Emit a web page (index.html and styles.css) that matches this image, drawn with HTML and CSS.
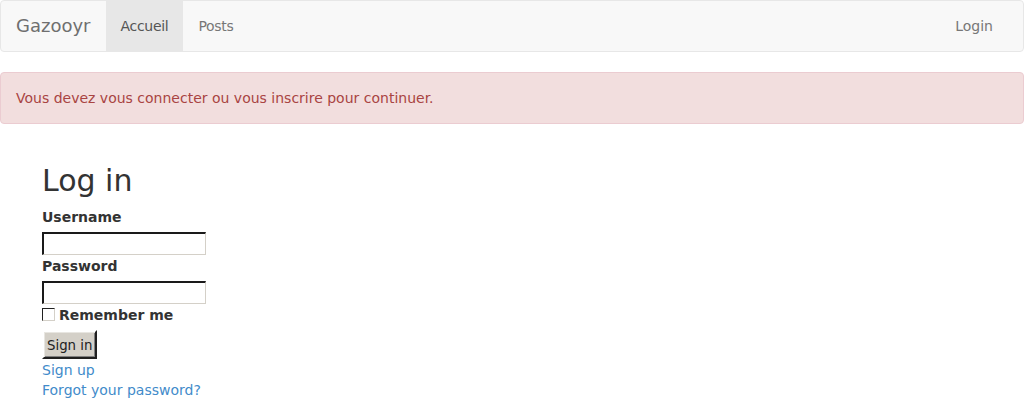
FILE: index.html
```html
<!DOCTYPE html>
<html>
<head>
<meta charset="utf-8">
<title>Gazooyr</title>
<link rel="stylesheet" href="styles.css">
</head>
<body>
<nav class="navbar">
  <div class="nav-left">
    <a class="brand" href="#">Gazooyr</a>
    <a class="nav-link tight active" href="#">Accueil</a>
    <a class="nav-link tight" href="#">Posts</a>
  </div>
  <div class="nav-right">
    <a class="nav-link" href="#">Login</a>
  </div>
</nav>
<div class="alert">Vous devez vous connecter ou vous inscrire pour continuer.</div>
<div class="container">
  <h2 class="title">Log in</h2>
  <form class="login-form">
    <div class="field">
      <label class="field-label" for="u">Username</label>
      <input class="text-input" id="u" type="text">
    </div>
    <div class="field">
      <label class="field-label" for="p">Password</label>
      <input class="text-input" id="p" type="password">
    </div>
    <div class="remember">
      <input class="checkbox" id="r" type="checkbox">
      <label class="remember-label" for="r">Remember me</label>
    </div>
    <div class="actions">
      <button class="submit" type="button">Sign in</button>
    </div>
  </form>
  <div class="links">
    <a class="link" href="#">Sign up</a>
    <a class="link" href="#">Forgot your password?</a>
  </div>
</div>
</body>
</html>
```
FILE: styles.css
```css
html, body {
  margin: 0;
  padding: 0;
}
body {
  font-family: "DejaVu Sans", sans-serif;
  font-size: 14px;
  line-height: 20px;
  color: #333;
  background: #fff;
}
a {
  text-decoration: none;
}
.navbar {
  display: flex;
  justify-content: space-between;
  height: 50px;
  background: #f8f8f8;
  border: 1px solid #e7e7e7;
  border-radius: 4px;
  margin-bottom: 20px;
}
.nav-left, .nav-right {
  display: flex;
}
.brand {
  display: block;
  padding: 15px;
  font-size: 18px;
  line-height: 20px;
  color: #6f6f6f;
}
.nav-link {
  display: block;
  padding: 15px;
  line-height: 20px;
  color: #777;
}
.nav-link.tight {
  letter-spacing: -0.3px;
}
.nav-link.active {
  background: #e7e7e7;
  color: #555;
}
.nav-right {
  padding-right: 15px;
}
.alert {
  padding: 15px;
  background: #f2dede;
  border: 1px solid #ebccd1;
  border-radius: 4px;
  color: #a94442;
  margin-bottom: 20px;
}
.container {
  width: 940px;
  margin: 0 auto;
  padding: 20px 15px 0;
}
.title {
  margin: 0 0 10px;
  font-size: 30px;
  line-height: 33px;
  font-weight: 500;
}
.login-form {
  margin: 0;
}
.field {
  display: flex;
  flex-direction: column;
  align-items: flex-start;
}
.field-label {
  display: block;
  font-weight: bold;
  height: 20px;
  margin-bottom: 5px;
}
.text-input {
  display: block;
  box-sizing: border-box;
  width: 164px;
  height: 23px;
  margin: 0 0 1px;
  padding: 1px 2px;
  background: #fff;
  border-style: solid;
  border-width: 2px 1px 1px 2px;
  border-color: #1a1a1a #d4d0c8 #d4d0c8 #1a1a1a;
  font: 13px "DejaVu Sans", sans-serif;
  outline: none;
}
.remember {
  display: flex;
  align-items: flex-start;
  height: 20px;
  margin-bottom: 5px;
}
.checkbox {
  -webkit-appearance: none;
  appearance: none;
  box-sizing: border-box;
  width: 13px;
  height: 13px;
  margin: 3px 4px 0 0;
  background: #fff;
  border-style: solid;
  border-width: 1px;
  border-color: #202020 #d4d0c8 #d4d0c8 #202020;
}
.remember-label {
  font-weight: bold;
  line-height: 20px;
}
.actions {
  display: flex;
  margin-bottom: 1px;
}
.submit {
  box-sizing: border-box;
  height: 29px;
  padding: 6px 3px 3px;
  margin: 0;
  background: #d4d0c8;
  border-style: solid;
  border-width: 2px;
  border-color: #fff #202020 #202020 #fff;
  box-shadow: inset 1px 1px 0 #e8e6e1, inset -1px -1px 0 #808080;
  font: 13.33px "DejaVu Sans", sans-serif;
  line-height: 16px;
  color: #222;
}
.links {
  display: flex;
  flex-direction: column;
  align-items: flex-start;
}
.link {
  color: #428bca;
  line-height: 20px;
}
```
